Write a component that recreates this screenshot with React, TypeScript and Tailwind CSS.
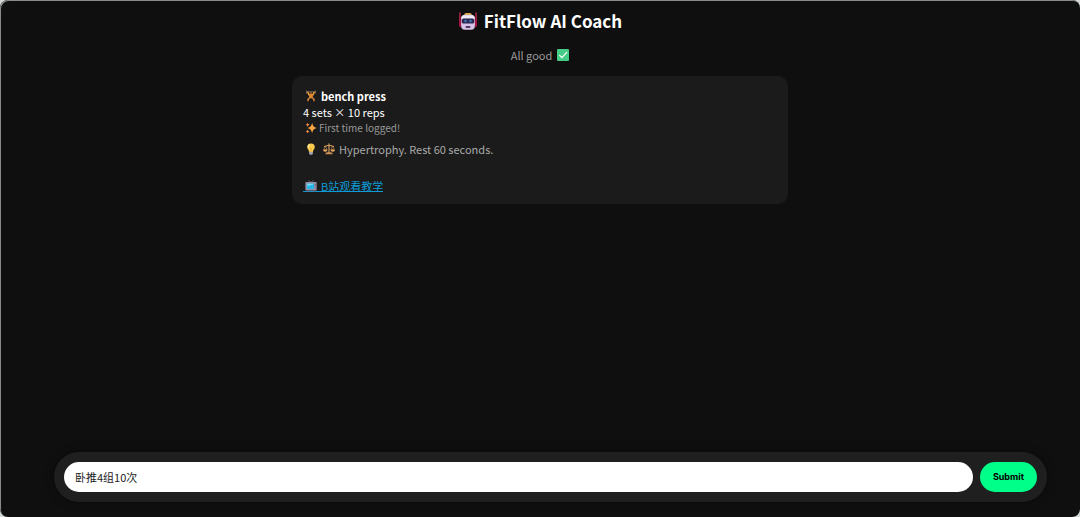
import { useState, type FormEvent, type ReactNode } from 'react'

function Emoji({ label, className, children }: { label: string; className: string; children: ReactNode }) {
  return (
    <svg viewBox="0 0 32 32" role="img" aria-label={label} className={`inline-block shrink-0 ${className}`}>
      {children}
    </svg>
  )
}

function Robot() {
  return (
    <Emoji label="robot" className="size-5">
      <path d="M3 3v21M29 3v21" stroke="#d0244d" strokeWidth="2" strokeLinecap="round" />
      <rect x="2" y="14" width="4" height="11" rx="2" fill="#a80f42" />
      <rect x="26" y="14" width="4" height="11" rx="2" fill="#a80f42" />
      <path d="M10 6a3 3 0 0 1 3-3h6a3 3 0 0 1 3 3v2H10z" fill="#d9a441" />
      <path d="M5 12a6 6 0 0 1 6-6h10a6 6 0 0 1 6 6v12a6 6 0 0 1-6 6H11a6 6 0 0 1-6-6z" fill="#d6c3e6" />
      <path d="M5 12a6 6 0 0 1 6-5h10a6 6 0 0 1 6 5z" fill="#f0e8f4" />
      <rect x="6" y="12" width="20" height="8" rx="3" fill="#2c2850" />
      <rect x="10" y="14" width="4" height="4" rx="2" fill="#3b7fb4" />
      <rect x="18" y="14" width="4" height="4" rx="2" fill="#3b7fb4" />
      <rect x="12" y="24" width="8" height="3" rx="1.5" fill="#533566" />
    </Emoji>
  )
}

function Check() {
  return (
    <Emoji label="done" className="size-3">
      <rect width="32" height="32" rx="3" fill="#45cc86" />
      <path d="m7 17 6 6L26 9" fill="none" stroke="#fff" strokeWidth="3.5" strokeLinecap="round" strokeLinejoin="round" />
    </Emoji>
  )
}

function Lifter() {
  return (
    <Emoji label="weight lifter" className="size-3">
      <path d="M4 4h24" stroke="#6f6258" strokeWidth="2" />
      <path d="M4 2v6M28 2v6" stroke="#7a604c" strokeWidth="3" strokeLinecap="round" />
      <path d="m7 5 4 8h10l4-8" fill="none" stroke="#eda63e" strokeWidth="4" strokeLinejoin="round" />
      <circle cx="16" cy="8" r="3.5" fill="#8a5630" />
      <path d="M10 11h12l-2 11h-8z" fill="#e08a30" />
      <path d="m13 20-5 5v5M19 20l5 5v5" fill="none" stroke="#d08038" strokeWidth="4" strokeLinejoin="round" />
    </Emoji>
  )
}

function Sparkles() {
  return (
    <Emoji label="sparkles" className="size-3">
      <path d="M19 2c2 9 4 11 12 14-8 3-10 5-12 14-2-9-4-11-12-14 8-3 10-5 12-14z" fill="#fca943" />
      <path d="M7 1c1 4 2 5 6 6-4 1-5 2-6 6-1-4-2-5-6-6 4-1 5-2 6-6zM7 20c1 3 2 4 5 5-3 1-4 2-5 5-1-3-2-4-5-5 3-1 4-2 5-5z" fill="#f98b42" />
    </Emoji>
  )
}

function Bulb() {
  return (
    <Emoji label="tip" className="size-3">
      <path d="M16 1a10 10 0 0 0-10 10c0 5 5 7 5 13h10c0-6 5-8 5-13A10 10 0 0 0 16 1z" fill="#fccb4b" />
      <path d="M12 5c-3 1-4 4-3 7" fill="none" stroke="#fff3b0" strokeWidth="3" strokeLinecap="round" />
      <path d="m13 13 3 3 3-3M16 16v8" fill="none" stroke="#e8a53c" strokeWidth="2" />
      <path d="M11 23h10v4a4 4 0 0 1-4 4h-2a4 4 0 0 1-4-4z" fill="#aaa2b0" />
    </Emoji>
  )
}

function Scales() {
  return (
    <Emoji label="balance" className="size-3">
      <path d="M16 2v25M4 9c5 0 7-3 12-3s7 3 12 3" fill="none" stroke="#d9a35f" strokeWidth="3" strokeLinecap="round" />
      <path d="m6 9-4 9h9zM26 9l-5 9h9z" fill="none" stroke="#bd8653" strokeWidth="2" />
      <path d="M0 18h12a6 5 0 0 1-12 0zM20 18h12a6 5 0 0 1-12 0z" fill="#e4aa62" />
      <path d="M6 30c0-4 4-6 10-6s10 2 10 6z" fill="#c98e54" />
    </Emoji>
  )
}

function Television() {
  return (
    <Emoji label="television" className="size-3">
      <path d="m10 1 6 6 6-6" fill="none" stroke="#8c8790" strokeWidth="2" />
      <rect x="1" y="5" width="30" height="23" rx="2" fill="#998ea4" />
      <rect x="5" y="9" width="19" height="15" rx="2" fill="#26b6e8" />
      <path d="M6 16v-5a1 1 0 0 1 1-1h15v2z" fill="#7bdaf2" />
      <path d="M27 11v4M27 18v2" stroke="#55475f" strokeWidth="2" />
      <path d="M6 28h4v3H6zM22 28h4v3h-4z" fill="#706477" />
    </Emoji>
  )
}

function WorkoutCard({ name, sets, reps }: { name: string; sets: number; reps: number }) {
  return (
    <article className="w-full max-w-[496px] rounded-[10px] bg-[#1b1b1b] px-[11px] py-3 text-[11px] leading-4 text-white">
      <h2 className="flex items-center gap-1 pl-[2px] font-bold">
        <Lifter />
        {name}
      </h2>
      <p>{sets} sets × {reps} reps</p>
      <p className="flex items-center gap-[2px] pl-[2px] text-[10px] text-[#999]">
        <Sparkles />
        First time logged!
      </p>
      <p className="mt-1 flex items-center gap-1 pl-[2px] leading-[18px] text-[#aaa]">
        <Bulb />
        <span className="ml-[2px] flex items-center gap-1">
          <Scales />
          Hypertrophy. Rest 60 seconds.
        </span>
      </p>
      <a
        href="https://search.bilibili.com/all?keyword=bench%20press"
        className="mt-[22px] flex h-3 w-fit items-center gap-1 border-b border-[#0e9bd8] pl-[2px] text-[#0e9bd8]"
      >
        <Television />
        B站观看教学
      </a>
    </article>
  )
}

export default function App() {
  const [entry, setEntry] = useState('卧推4组10次')

  const handleSubmit = (e: FormEvent) => e.preventDefault()

  return (
    <div className="bg-[#d5d8d8] font-['Noto_Sans_CJK_SC',sans-serif]">
      <div className="flex min-h-screen flex-col rounded-lg bg-[#0f0f0f] shadow-[inset_1px_1px_0_#888c8b]">
        <header className="flex flex-col items-center pt-[5px]">
          <h1 className="flex items-center gap-[6px] text-[17px] leading-8 font-bold text-white">
            <Robot />
            FitFlow AI Coach
          </h1>
          <p className="mt-2 flex items-center gap-[5px] text-[11px] leading-5 text-[#999]">
            All good
            <Check />
          </p>
        </header>

        <main className="mt-[11px] flex flex-1 items-start justify-center">
          <WorkoutCard name="bench press" sets={4} reps={10} />
        </main>

        <form
          onSubmit={handleSubmit}
          className="mr-[33px] mb-[15px] ml-[5%] flex gap-[7px] rounded-[25px] bg-[#1f1f1f] p-[10px] shadow-[0_0_10px_#0006]"
        >
          <input
            type="text"
            aria-label="Workout"
            value={entry}
            onChange={e => setEntry(e.target.value)}
            className="h-[30px] min-w-0 flex-1 rounded-full bg-white px-[11px] text-[11px] text-[#222] outline-none"
          />
          <button
            type="submit"
            className="h-[30px] rounded-full bg-[#00ff88] px-[13px] font-[Inter,sans-serif] text-[9px] font-bold text-black"
          >
            Submit
          </button>
        </form>
      </div>
    </div>
  )
}
